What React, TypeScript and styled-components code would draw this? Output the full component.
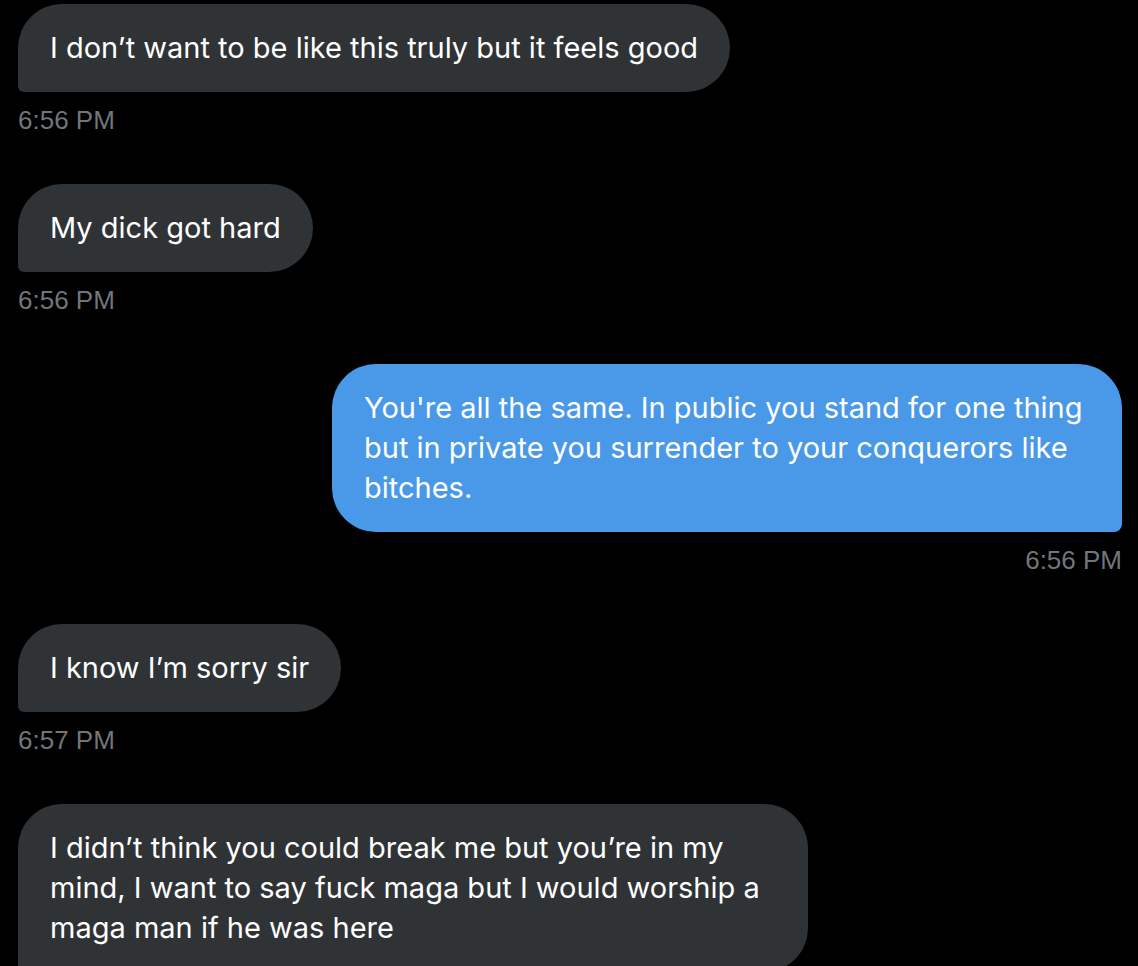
import React from 'react';
import styled, { createGlobalStyle } from 'styled-components';

const GlobalStyle = createGlobalStyle`
  html, body {
    margin: 0;
    background: #000;
  }
`;

const StyledThread = styled.div`
  display: flex;
  flex-direction: column;
  padding: 4px 16px 0 18px;
  height: 966px;
  overflow: hidden;
  box-sizing: border-box;
`;

const StyledMessage = styled.div<{ $mine?: boolean }>`
  display: flex;
  flex-direction: column;
  align-items: ${({ $mine }) => ($mine ? 'flex-end' : 'flex-start')};
  margin-bottom: 50px;
`;

const StyledBubble = styled.div<{ $mine?: boolean }>`
  max-width: 790px;
  box-sizing: border-box;
  padding: 24px 32px;
  font-family: Inter, 'Noto Sans', sans-serif;
  font-size: 29px;
  line-height: 40px;
  color: #fff;
  background: ${({ $mine }) => ($mine ? '#4a99e8' : '#2f3336')};
  border-radius: ${({ $mine }) => ($mine ? '44px 44px 8px 44px' : '44px 44px 44px 6px')};
`;

const StyledTime = styled.div`
  margin-top: 14px;
  font-family: 'Liberation Sans', Arial, sans-serif;
  font-size: 26px;
  line-height: 28px;
  color: #71767b;
`;

type Message = { text: string; time?: string; mine?: boolean };

const messages: Message[] = [
  { text: 'I don\u2019t want to be like this truly but it feels good', time: '6:56 PM' },
  { text: 'My dick got hard', time: '6:56 PM' },
  {
    text: "You're all the same. In public you stand for one thing but in private you surrender to your conquerors like bitches.",
    time: '6:56 PM',
    mine: true,
  },
  { text: 'I know I\u2019m sorry sir', time: '6:57 PM' },
  {
    text: 'I didn\u2019t think you could break me but you\u2019re in my mind, I want to say fuck maga but I would worship a maga man if he was here',
  },
];

const App = () => {
  return (
    <>
      <GlobalStyle />
      <StyledThread>
        {messages.map((m, i) => (
          <StyledMessage key={i} $mine={m.mine}>
            <StyledBubble $mine={m.mine}>{m.text}</StyledBubble>
            {m.time && <StyledTime>{m.time}</StyledTime>}
          </StyledMessage>
        ))}
      </StyledThread>
    </>
  );
};

export default App;
